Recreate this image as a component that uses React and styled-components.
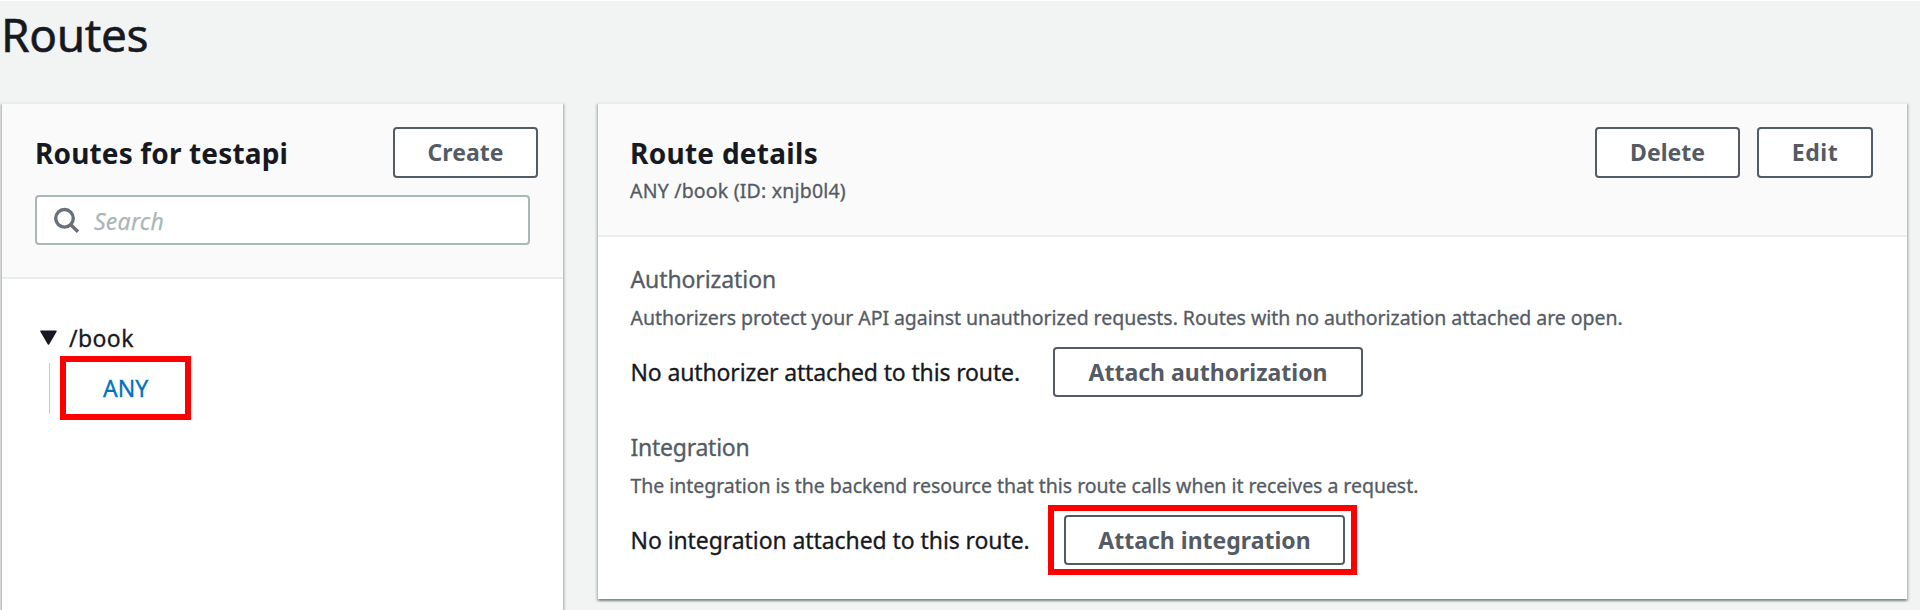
import React from 'react';
import styled, { createGlobalStyle } from 'styled-components';

const GlobalStyle = createGlobalStyle`
  * { box-sizing: border-box; }
  body {
    margin: 0;
    background: #f2f3f3;
    color: #16191f;
    font-family: "Noto Sans", "Open Sans", sans-serif;
    font-size: 23px;
    overflow: hidden;
  }
  h1, h2, h3, p { margin: 0; font-weight: 400; }
`;

const Page = styled.div`
  height: 610px;
  overflow: hidden;
  border-top: 1px solid #fff;
`;

const PageTitle = styled.h1`
  height: 101px;
  padding: 5px 0 0;
  font-size: 46px;
  line-height: 56px;
  letter-spacing: -0.4px;
  text-indent: 1px;
  -webkit-text-stroke: 0.5px;
`;

const Columns = styled.main`
  display: grid;
  grid-template-columns: 561px 1309px;
  column-gap: 35px;
  align-items: start;
  padding-left: 2px;
`;

const Panel = styled.section`
  height: ${p => p.$height}px;
  background: #fff;
  border-top: 2px solid #eaeded;
  box-shadow: 0 2px 2px 0 rgba(0, 28, 36, 0.3), 2px 2px 2px 0 rgba(0, 28, 36, 0.15),
    -2px 2px 2px 0 rgba(0, 28, 36, 0.15);
`;

const PanelHeader = styled.header`
  height: ${p => p.$height}px;
  padding: 23px ${p => p.$right}px 0 ${p => p.$left}px;
  background: #fafafa;
  border-bottom: 2px solid #eaeded;
`;

const HeaderRow = styled.div`
  display: flex;
  align-items: flex-start;
  justify-content: space-between;
`;

const PanelTitle = styled.h2`
  font-size: 28px;
  font-weight: 700;
  line-height: 52px;
  letter-spacing: ${p => p.$spacing}px;
`;

const Actions = styled.div`
  display: flex;
  gap: 17px;
`;

const Button = styled.button`
  width: ${p => p.$width}px;
  height: ${p => p.$height || 50}px;
  padding: 0 0 1px;
  background: #fff;
  border: 2px solid #545b64;
  border-radius: 4px;
  color: #545b64;
  font: 700 23px "Noto Sans", "Open Sans", sans-serif;
  letter-spacing: ${p => p.$spacing || 0}px;
  white-space: nowrap;
`;

const SearchBox = styled.label`
  display: flex;
  align-items: center;
  gap: 14px;
  width: 495px;
  height: 50px;
  margin: 16px 0 0;
  padding: 0 16px;
  background: #fff;
  border: 2px solid #aab7b8;
  border-radius: 4px;
`;

const SearchInput = styled.input`
  flex: 1;
  min-width: 0;
  padding: 2px 0 0;
  border: 0;
  outline: 0;
  background: transparent;
  font: italic 400 23px "Noto Sans", "Open Sans", sans-serif;
  letter-spacing: 0.25px;
  &::placeholder { color: #aab7b8; opacity: 1; -webkit-text-stroke: 0.25px; }
`;

const Tree = styled.div`
  padding: 35px 0 0 38px;
`;

const TreeNode = styled.div`
  display: flex;
  align-items: center;
  gap: 12px;
  height: 49px;
  padding-bottom: 2px;
  letter-spacing: 0.4px;
  -webkit-text-stroke: 0.3px;
`;

const TreeBranch = styled.div`
  position: relative;
  display: flex;
  align-items: center;
  height: 51px;
  margin-left: 9px;
  padding: 0 0 1px 53px;
  border-left: 1px solid #c9cccc;
`;

const MethodLink = styled.a`
  color: #0073bb;
  -webkit-text-stroke: 0.3px;
`;

const Highlight = styled.span`
  position: absolute;
  top: ${p => p.$top}px;
  left: ${p => p.$left}px;
  width: ${p => p.$width}px;
  height: ${p => p.$height}px;
  border: 6px solid #f00;
  pointer-events: none;
`;

const Subtitle = styled.p`
  margin-top: -1px;
  color: #545b64;
  font-size: 19.5px;
  line-height: 26px;
  letter-spacing: 0.2px;
  -webkit-text-stroke: 0.3px;
`;

const Details = styled.div`
  display: grid;
  row-gap: 35px;
  padding: 27px 33px 0 32.5px;
`;

const DetailTitle = styled.h3`
  color: #545b64;
  font-size: 23px;
  line-height: 30px;
  letter-spacing: ${p => p.$spacing}px;
  -webkit-text-stroke: 0.3px;
`;

const DetailText = styled.p`
  margin-top: 11px;
  color: #545b64;
  font-size: 19.5px;
  line-height: 26px;
  letter-spacing: ${p => p.$spacing}px;
  -webkit-text-stroke: 0.3px;
`;

const DetailRow = styled.div`
  display: flex;
  align-items: center;
  margin-top: 16px;
`;

const Status = styled.span`
  width: ${p => p.$width}px;
  padding-bottom: 1px;
  letter-spacing: ${p => p.$spacing}px;
  white-space: nowrap;
  -webkit-text-stroke: 0.3px;
`;

const ButtonWrap = styled.div`
  position: relative;
  display: flex;
`;

const SearchIcon = () => (
  <svg width="27" height="27" viewBox="0 0 27 27" fill="none" stroke="#687078" strokeWidth="3.4">
    <circle cx="11.5" cy="11.3" r="8.8" />
    <path d="M17.5 17.5 L25 24.8" />
  </svg>
);

const CaretDown = () => (
  <svg width="17" height="15" viewBox="0 0 17 15">
    <path d="M1.2 1.4 H15.8 L8.5 13.9 Z" fill="#16191f" stroke="#16191f" strokeWidth="1.8" strokeLinejoin="round" />
  </svg>
);

export default function App() {
  return (
    <Page>
      <GlobalStyle />
      <PageTitle>Routes</PageTitle>
      <Columns>
        <Panel $height={520}>
          <PanelHeader $height={175} $left={33} $right={25}>
            <HeaderRow>
              <PanelTitle $spacing={0.15}>Routes for testapi</PanelTitle>
              <Button $width={145} $height={51}>Create</Button>
            </HeaderRow>
            <SearchBox>
              <SearchIcon />
              <SearchInput placeholder="Search" />
            </SearchBox>
          </PanelHeader>
          <Tree>
            <TreeNode><CaretDown />/book</TreeNode>
            <TreeBranch>
              <MethodLink>ANY</MethodLink>
              <Highlight $top={-7} $left={10} $width={131} $height={64} />
            </TreeBranch>
          </Tree>
        </Panel>

        <Panel $height={497}>
          <PanelHeader $height={133} $left={32} $right={34}>
            <HeaderRow>
              <PanelTitle $spacing={0.28}>Route details</PanelTitle>
              <Actions>
                <Button $width={145} $height={51}>Delete</Button>
                <Button $width={116} $height={51} $spacing={0.5}>Edit</Button>
              </Actions>
            </HeaderRow>
            <Subtitle>ANY /book (ID: xnjb0l4)</Subtitle>
          </PanelHeader>
          <Details>
            <div>
              <DetailTitle $spacing={-0.1}>Authorization</DetailTitle>
              <DetailText $spacing={-0.05}>
                Authorizers protect your API against unauthorized requests. Routes with no authorization attached are open.
              </DetailText>
              <DetailRow>
                <Status $width={422.5} $spacing={-0.14}>No authorizer attached to this route.</Status>
                <Button $width={310}>Attach authorization</Button>
              </DetailRow>
            </div>
            <div>
              <DetailTitle $spacing={-0.25}>Integration</DetailTitle>
              <DetailText $spacing={-0.04}>
                The integration is the backend resource that this route calls when it receives a request.
              </DetailText>
              <DetailRow>
                <Status $width={433.5} $spacing={-0.08}>No integration attached to this route.</Status>
                <ButtonWrap>
                  <Button $width={281}>Attach integration</Button>
                  <Highlight $top={-10} $left={-16} $width={309} $height={70} />
                </ButtonWrap>
              </DetailRow>
            </div>
          </Details>
        </Panel>
      </Columns>
    </Page>
  );
}
